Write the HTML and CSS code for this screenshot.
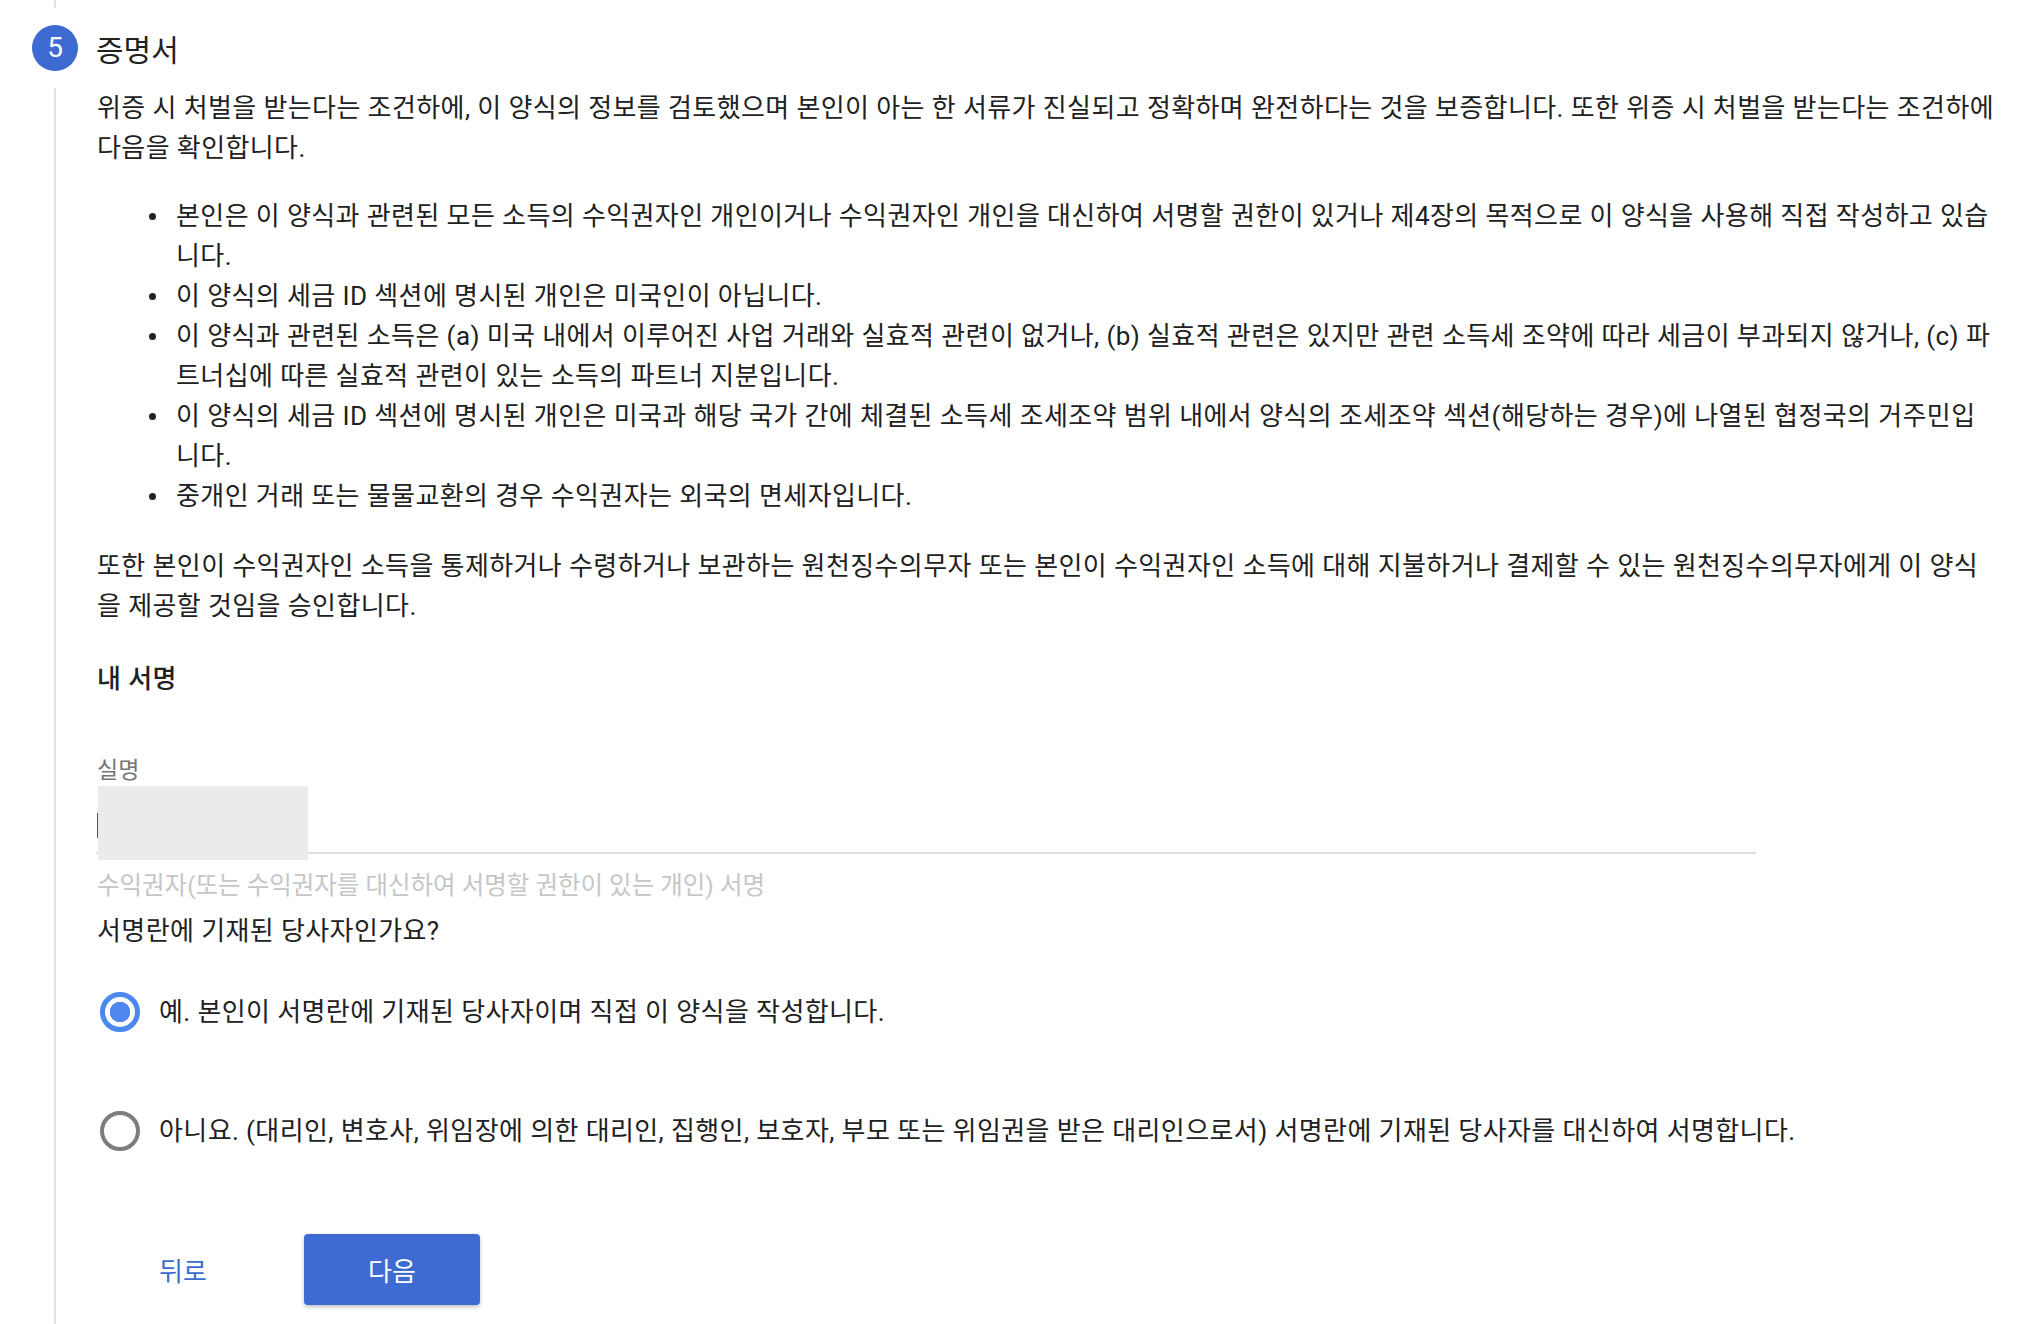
FILE: index.html
```html
<!DOCTYPE html>
<html lang="ko">
<head>
  <meta charset="UTF-8">
  <title>증명서</title>
  <link rel="stylesheet" href="styles.css">
</head>
<body>
<div class="step">
  <div class="rail-top"></div>
  <div class="step-head">
    <span class="badge">5</span>
    <h2 class="step-title">증명서</h2>
  </div>

  <div class="step-body">
    <p class="text">위증 시 처벌을 받는다는 조건하에, 이 양식의 정보를 검토했으며 본인이 아는 한 서류가 진실되고 정확하며 완전하다는 것을 보증합니다. 또한 위증 시 처벌을 받는다는 조건하에 다음을 확인합니다.</p>

    <ul class="terms">
      <li>본인은 이 양식과 관련된 모든 소득의 수익권자인 개인이거나 수익권자인 개인을 대신하여 서명할 권한이 있거나 제4장의 목적으로 이 양식을 사용해 직접 작성하고 있습니다.</li>
      <li>이 양식의 세금 ID 섹션에 명시된 개인은 미국인이 아닙니다.</li>
      <li>이 양식과 관련된 소득은 (a) 미국 내에서 이루어진 사업 거래와 실효적 관련이 없거나, (b) 실효적 관련은 있지만 관련 소득세 조약에 따라 세금이 부과되지 않거나, (c) 파트너십에 따른 실효적 관련이 있는 소득의 파트너 지분입니다.</li>
      <li>이 양식의 세금 ID 섹션에 명시된 개인은 미국과 해당 국가 간에 체결된 소득세 조세조약 범위 내에서 양식의 조세조약 섹션(해당하는 경우)에 나열된 협정국의 거주민입니다.</li>
      <li>중개인 거래 또는 물물교환의 경우 수익권자는 외국의 면세자입니다.</li>
    </ul>

    <p class="text text-after">또한 본인이 수익권자인 소득을 통제하거나 수령하거나 보관하는 원천징수의무자 또는 본인이 수익권자인 소득에 대해 지불하거나 결제할 수 있는 원천징수의무자에게 이 양식을 제공할 것임을 승인합니다.</p>

    <h3 class="sub">내 서명</h3>

    <div class="field">
      <label class="field-label" for="fullname">실명</label>
      <div class="field-input">
        <span class="caret"></span>
        <span class="mask"></span>
      </div>
      <div class="field-hint">수익권자(또는 수익권자를 대신하여 서명할 권한이 있는 개인) 서명</div>
    </div>

    <div class="question">서명란에 기재된 당사자인가요?</div>

    <div class="radios">
      <label class="radio checked"><span class="radio-mark"></span>예. 본인이 서명란에 기재된 당사자이며 직접 이 양식을 작성합니다.</label>
      <label class="radio"><span class="radio-mark"></span>아니요. (대리인, 변호사, 위임장에 의한 대리인, 집행인, 보호자, 부모 또는 위임권을 받은 대리인으로서) 서명란에 기재된 당사자를 대신하여 서명합니다.</label>
    </div>

    <div class="actions">
      <button class="btn-text">뒤로</button>
      <button class="btn-primary">다음</button>
    </div>
  </div>
</div>
</body>
</html>
```

FILE: styles.css
```css
body {
  margin: 0;
  background: #fff;
  font-family: Roboto, "Noto Sans CJK KR", sans-serif;
  color: #212121;
}
.rail-top {
  height: 8px;
  margin-left: 54px;
  border-left: 2px solid #e2e2e2;
}
.step-head {
  display: flex;
  align-items: center;
  gap: 18px;
  margin-top: 16px;
  padding-left: 32px;
  height: 47px;
}
.badge {
  width: 46px;
  height: 46px;
  border-radius: 50%;
  background: #3d6bd1;
  color: #fff;
  font-size: 28px;
  display: flex;
  align-items: center;
  justify-content: center;
}
.step-title {
  margin: 0;
  font-size: 30px;
  font-weight: 400;
}
.step-body {
  margin: 17px 0 0 54px;
  border-left: 2px solid #e2e2e2;
  padding: 0 24px 20px 41px;
  font-size: 26px;
  line-height: 40px;
  letter-spacing: 0.4px;
}
.text {
  margin: 0;
}
.terms {
  list-style: none;
  margin: 28px 0 0;
  padding: 0 0 0 79px;
}
.terms li {
  display: flex;
}
.terms li::before {
  content: "";
  flex: 0 0 7px;
  height: 7px;
  margin: 17px 20px 0 -27px;
  border-radius: 50%;
  background: #212121;
}
.text-after {
  margin-top: 30px;
}
.sub {
  margin: 33px 0 0;
  font-size: 26px;
  font-weight: 500;
}
.field {
  margin-top: 57px;
}
.field-label {
  display: block;
  font-size: 23px;
  line-height: 30px;
  letter-spacing: 0;
  color: #757575;
}
.field-input {
  position: relative;
  width: 1660px;
  height: 66px;
  margin-left: -1px;
  border-bottom: 2px solid #e0e0e0;
}
.caret {
  position: absolute;
  left: 1px;
  top: 27px;
  width: 2px;
  height: 25px;
  background: #555;
}
.mask {
  position: absolute;
  left: 2px;
  top: 0;
  width: 210px;
  height: 74px;
  background: #ebebeb;
}
.field-hint {
  margin-top: 17px;
  font-size: 24.5px;
  line-height: 30px;
  letter-spacing: 0;
  color: #c6c6c6;
}
.question {
  margin-top: 10px;
}
.radios {
  margin-top: 41px;
  display: flex;
  flex-direction: column;
  gap: 79px;
}
.radio {
  display: flex;
  align-items: center;
  gap: 19px;
  padding-left: 3px;
}
.radio-mark {
  flex: 0 0 auto;
  box-sizing: border-box;
  width: 40px;
  height: 40px;
  border-radius: 50%;
  border: 4px solid #7d7d7d;
}
.radio.checked .radio-mark {
  border: 5px solid #4a88ee;
  background: radial-gradient(circle, #4f87ee 0 10px, transparent 10.5px);
}
.actions {
  display: flex;
  align-items: center;
  gap: 35px;
  margin-top: 83px;
}
.actions button {
  font-family: inherit;
  font-size: 26px;
  height: 71px;
  border: none;
  border-radius: 4px;
  cursor: pointer;
}
.btn-text {
  width: 172px;
  background: none;
  color: #3d6bd1;
}
.btn-primary {
  width: 176px;
  background: #3d6bd1;
  color: #fff;
  box-shadow: 0 2px 4px rgba(0,0,0,0.25);
}
```
